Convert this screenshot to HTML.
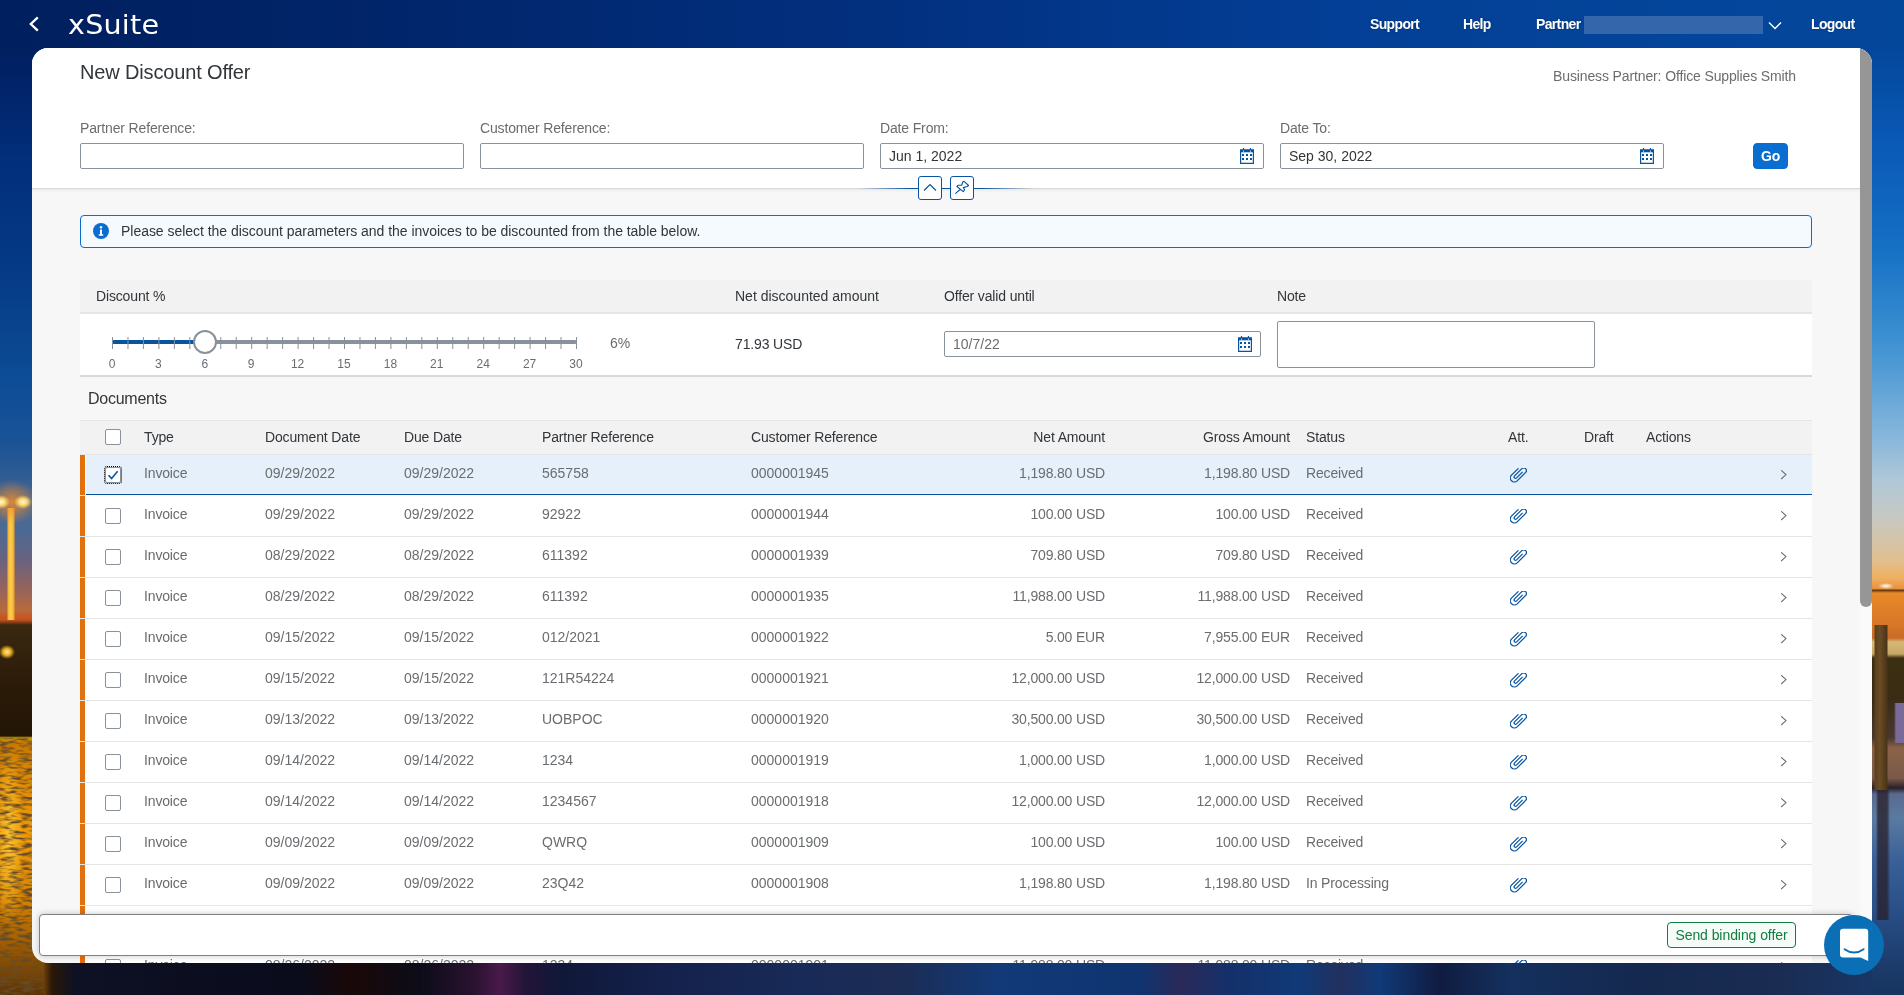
<!DOCTYPE html>
<html lang="en"><head><meta charset="utf-8"><title>New Discount Offer</title>
<style>
*{box-sizing:border-box;margin:0;padding:0}
html,body{width:1904px;height:995px;overflow:hidden}
body{position:relative;font-family:"Liberation Sans","DejaVu Sans",sans-serif;font-size:14px;color:#32363a;background:#02286e}
.abs{position:absolute}
#root{position:absolute;left:0;top:0;width:1904px;height:995px;will-change:transform}
#bg{position:absolute;left:0;top:0;width:1904px;height:995px;background:linear-gradient(90deg,#001f5e 0%,#01256a 20%,#022f7e 45%,#033f96 70%,#03459a 88%,#03479b 100%)}
#bgl{position:absolute;left:0;top:48px;width:44px;height:947px;background:radial-gradient(9px 7px at 1px 454px,#fffbe0 0%,#ffd870 45%,rgba(248,176,64,0) 100%),radial-gradient(9px 7px at 23px 454px,#fffbe0 0%,#ffd870 45%,rgba(248,176,64,0) 100%),radial-gradient(26px 22px at 12px 454px,rgba(240,140,40,.85) 0%,rgba(240,140,40,.45) 50%,rgba(240,140,40,0) 100%),linear-gradient(90deg,transparent 7px,#f4b434 8px,#fcd050 11px,#f0a428 14px,transparent 15px) 0 460px/32px 112px no-repeat,radial-gradient(8px 7px at 7px 604px,#fff0a0 0%,#e8a820 50%,rgba(224,160,32,0) 100%),radial-gradient(14px 90px at 9px 790px,rgba(255,200,50,.9) 0%,rgba(255,192,48,0) 100%),linear-gradient(180deg,#00205f 0px,#01246a 40px,#022e7a 110px,#053a86 220px,#0d4c96 332px,#1a5296 392px,#2a5a94 422px,#4a6690 452px,#4a6a94 482px,#6a6280 512px,#96645a 542px,#b86a3c 562px,#c8501c 572px,#3a2810 577px,#2a1a08 640px,#241606 688px,#c8a000 690px,#c87800 694px,#e08a00 730px,#f09a08 790px,#d88400 850px,#9a5800 900px,#5a3408 947px)}
#bgr{position:absolute;left:1872px;top:48px;width:32px;height:947px;background:radial-gradient(8px 3px at 14px 538px,#ffffff 0%,rgba(255,255,255,0) 100%),linear-gradient(90deg,transparent 2px,#5a4020 3px,#6a4c24 8px,#4a3418 15px,transparent 16px) 0 577px/33px 165px no-repeat,linear-gradient(90deg,transparent 4px,rgba(40,30,40,.75) 6px,rgba(40,30,40,.75) 15px,transparent 18px) 0 742px/33px 130px no-repeat,linear-gradient(90deg,transparent 22px,#7a6a9a 24px) 0 655px/33px 40px no-repeat,linear-gradient(180deg,#03479b 0px,#0a5ab8 100px,#1570c4 200px,#3a8ed0 285px,#4a98d4 312px,#8ab8dc 392px,#b0c8d8 432px,#c8c8c0 472px,#e0c090 512px,#f0b060 530px,#e89040 541px,#5a3010 542px,#e88a28 545px,#d87828 575px,#c86c24 590px,#d8b878 594px,#c8a868 606px,#3a3010 610px,#3a2c14 650px,#4a3830 690px,#8a6248 700px,#7a5a48 730px,#2a2028 740px,#5a6a90 746px,#5a7aa0 770px,#3a6098 812px,#2a5088 860px,#1c3c6c 915px,#18345f 947px)}
#bgb{position:absolute;left:0;top:940px;width:1904px;height:55px;background:linear-gradient(90deg,#d08810 0px,#8a5208 40px,#2a1808 52px,#0e1024 75px,#0a0c1c 300px,#1a0808 350px,#0c0c18 420px,#2a1230 475px,#4a1a4a 500px,#241438 525px,#101838 560px,#14204a 650px,#182a58 800px,#1c2c54 900px,#123a78 1000px,#0f3470 1140px,#2a2a58 1180px,#14306a 1230px,#103a78 1300px,#22305e 1340px,#103a78 1380px,#101c40 1440px,#14305e 1510px,#15284e 1650px,#1a2c52 1780px,#173a6c 1904px)}
/* shell header */
#back{left:28px;top:16px}
#logo{left:68px;top:9px;font-family:"DejaVu Sans","Liberation Sans",sans-serif;font-size:26px;line-height:32px;color:#fff;letter-spacing:0.2px;font-weight:400;transform-origin:0 0;transform:scaleX(1.1)}
.nav{color:#fff;font-weight:700;font-size:14px;line-height:16px;top:16px;white-space:nowrap;letter-spacing:-0.65px;text-shadow:0 0 2px rgba(0,0,0,.35)}
#redact{left:1584px;top:16px;width:179px;height:18px;background:#3466ab}
/* card */
#card{left:32px;top:48px;width:1840px;height:915px;background:#f7f7f7;border-radius:16px 16px 0 16px;overflow:hidden}
#hdr{left:0;top:0;width:1828px;height:140px;background:#fff;box-shadow:0 1px 0 #d9d9d9,0 2px 3px rgba(0,0,0,.08)}
#sb{left:1828px;top:0;width:12px;height:915px;background:#fafafa}
#sbt{left:1828px;top:0;width:12px;height:559px;background:#969696;border-radius:0 12px 6px 6px}
.t{position:absolute;white-space:nowrap;line-height:16px;font-size:14px}
.g{color:#6a6d70}
#title{left:80px;top:60px;font-size:20px;line-height:24px;color:#32363a;letter-spacing:-0.15px}
#bp{right:108px;top:68px;letter-spacing:-0.13px}
.inp{position:absolute;height:26px;border:1px solid #89919a;border-radius:2px;background:#fff;font-size:14px;line-height:24px;padding-left:8px;color:#32363a;white-space:nowrap}
.cal{position:absolute;width:14px;height:16px}
#go{left:1753px;top:143px;width:35px;height:26px;border-radius:4px;background:#0a6ed1;border:1px solid #0a6ed1;color:#fff;font-weight:700;font-size:14px;line-height:24px;text-align:center;letter-spacing:-0.3px}
.hb{position:absolute;top:176px;width:24px;height:24px;border:1px solid #0854a0;border-radius:3px;background:#fff}
#hline{left:858px;top:188px;width:176px;height:1px;background:linear-gradient(90deg,rgba(8,84,160,0) 0%,#0854a0 30%,#0854a0 70%,rgba(8,84,160,0) 100%)}
#msg{left:80px;top:215px;width:1732px;height:33px;border:1px solid #0a6ed1;border-radius:4px;background:#f5faff}
/* discount table */
#dth{left:80px;top:280px;width:1732px;height:34px;background:#f2f2f2;border-bottom:2px solid #e5e5e5}
#dtr{left:80px;top:314px;width:1732px;height:63px;background:#fff;border-bottom:2px solid #d9d9d9}
#trk{left:112px;top:340px;width:465px;height:4px;background:#89919a;border-radius:2px}
#trkf{left:112px;top:340px;width:92px;height:4px;background:#0854a0;border-radius:2px 0 0 2px}
#ticks{left:112px;top:337px;width:465px;height:12px}
#hdl{left:193px;top:330px;width:24px;height:24px;border-radius:50%;border:2px solid #89919a;background:#fff}
.tl{position:absolute;top:357px;width:30px;margin-left:-15px;text-align:center;font-size:12px;line-height:14px;color:#6a6d70}
#note{left:1277px;top:321px;width:318px;height:47px;border:1px solid #89919a;border-radius:2px;background:#fff}
/* documents table */
#th{left:80px;top:420px;width:1732px;height:35px;background:#f2f2f2;border-top:1px solid #e5e5e5;border-bottom:1px solid #e5e5e5}
.h{position:absolute;top:429px;line-height:16px;font-size:14px;color:#32363a;white-space:nowrap}
.row{position:absolute;left:80px;width:1732px;height:41px;background:#fff;border-bottom:1px solid #e5e5e5}
.row:before{content:"";position:absolute;left:0;top:0;width:5px;height:40px;background:#e2700c}
.row.sel{border-bottom:none;background:linear-gradient(#0854a0,#0854a0) 6px 39px/100% 1px no-repeat,linear-gradient(90deg,#e5e5e5 6px,#fff 6px) 0 40px/100% 1px no-repeat,linear-gradient(90deg,#fff 6px,#e5f0fa 6px)}
.row.sel:after{display:none}
.cb{position:absolute;left:25px;top:12px;width:16px;height:16px;border:1px solid #89919a;border-radius:2px;background:#fff}
.cb.on{outline:1px dotted #000;outline-offset:0px}
.cb svg{position:absolute;left:1px;top:1px}
.c{position:absolute;top:10px;line-height:16px;font-size:14px;color:#6a6d70;white-space:nowrap}
.c1{left:64px}.c2{left:185px}.c3{left:324px}.c4{left:462px}.c5{left:671px}
.c6{right:707px}.c7{right:522px}.c8{left:1226px}
.clip{position:absolute;left:1430px;top:13px}
.chv{position:absolute;left:1700px;top:15px}
/* footer */
#foot{left:39px;top:914px;width:1814px;height:42px;background:#fff;border:1px solid #808080;border-radius:4px;box-shadow:0 0 6px rgba(0,0,0,.22)}
#send{left:1667px;top:922px;width:129px;height:26px;border:1px solid #107e3e;border-radius:4px;background:#f5fbf7;color:#107e3e;font-size:14px;line-height:24px;text-align:center;letter-spacing:-0.07px}
#chat{left:1824px;top:915px;width:60px;height:60px;border-radius:50%;background:#0a6fb5}
#clip{left:0;top:0;width:1904px;height:963px;overflow:hidden}
.h,.c1,.c8,.t{letter-spacing:-0.15px}
.c6,.c7{letter-spacing:-0.17px}

</style></head>
<body>
<div id="root">
<div id="bg"></div><div id="bgb"></div><div id="bgl"></div>
<svg class="abs" style="left:0;top:738px" width="44" height="257" viewBox="0 0 44 257"><defs><filter id="wn" x="0" y="0" width="100%" height="100%"><feTurbulence type="fractalNoise" baseFrequency="0.09 0.32" numOctaves="2" seed="7"/><feColorMatrix type="matrix" values="0 0 0 0 0.13  0 0 0 0 0.07  0 0 0 0 0.02  3.2 0 0 0 -1.35"/></filter></defs><rect width="44" height="257" filter="url(#wn)"/></svg><div id="bgr"></div>
<svg id="back" class="abs" width="14" height="16" viewBox="0 0 14 16"><path d="M9.8 1.3 2.8 8 9.8 14.7" fill="none" stroke="#fff" stroke-width="2.3"/></svg>
<div id="logo" class="abs">xSuite</div>
<div class="abs nav" style="left:1370px">Support</div>
<div class="abs nav" style="left:1463px">Help</div>
<div class="abs nav" style="left:1536px">Partner</div>
<div id="redact" class="abs"></div>
<svg class="abs" style="left:1768px;top:21px" width="14" height="9" viewBox="0 0 14 9"><path d="M1 1.5 7 7.5 13 1.5" fill="none" stroke="#fff" stroke-width="1.4"/></svg>
<div class="abs nav" style="left:1811px">Logout</div>
<div id="card" class="abs">
 <div id="hdr" class="abs"></div>
 <div id="sb" class="abs"></div><div id="sbt" class="abs"></div>
</div>

<div id="title" class="abs">New Discount Offer</div>
<div id="bp" class="t g">Business Partner: Office Supplies Smith</div>
<div class="t g" style="left:80px;top:120px">Partner Reference:</div>
<div class="t g" style="left:480px;top:120px">Customer Reference:</div>
<div class="t g" style="left:880px;top:120px">Date From:</div>
<div class="t g" style="left:1280px;top:120px">Date To:</div>
<div class="inp" style="left:80px;top:143px;width:384px"></div>
<div class="inp" style="left:480px;top:143px;width:384px"></div>
<div class="inp" style="left:880px;top:143px;width:384px">Jun 1, 2022</div>
<div class="inp" style="left:1280px;top:143px;width:384px">Sep 30, 2022</div>
<svg class="cal" style="left:1240px;top:148px" viewBox="0 0 14 16"><path d="M0.6 1.9h12.8v13.5H0.6z" fill="none" stroke="#0854a0" stroke-width="1.2"/><path d="M0.6 1.9h12.8v2.4H0.6z" fill="#0854a0"/><path d="M3.5 0v2M10.5 0v2" stroke="#0854a0" stroke-width="1.2"/><circle cx="3.5" cy="3.1" r=".6" fill="#fff"/><circle cx="10.5" cy="3.1" r=".6" fill="#fff"/><path d="M2 6h2v2H2zM6 6h2v2H6zM10 6h2v2h-2zM2 10h2v2H2zM6 10h2v2H6zM10 10h2v2h-2z" fill="#0854a0"/></svg><svg class="cal" style="left:1640px;top:148px" viewBox="0 0 14 16"><path d="M0.6 1.9h12.8v13.5H0.6z" fill="none" stroke="#0854a0" stroke-width="1.2"/><path d="M0.6 1.9h12.8v2.4H0.6z" fill="#0854a0"/><path d="M3.5 0v2M10.5 0v2" stroke="#0854a0" stroke-width="1.2"/><circle cx="3.5" cy="3.1" r=".6" fill="#fff"/><circle cx="10.5" cy="3.1" r=".6" fill="#fff"/><path d="M2 6h2v2H2zM6 6h2v2H6zM10 6h2v2h-2zM2 10h2v2H2zM6 10h2v2H6zM10 10h2v2h-2z" fill="#0854a0"/></svg>
<div id="go" class="abs">Go</div>
<div id="hline" class="abs"></div>
<div class="hb" style="left:918px"><svg width="22" height="22" viewBox="0 0 22 22"><path d="M5 13.5 11 7.5 17 13.5" fill="none" stroke="#0854a0" stroke-width="1.2"/></svg></div>
<div class="hb" style="left:950px"><svg width="22" height="22" viewBox="0 0 22 22"><path d="M13 4.3 17.6 8.5 16.2 9.5 12.3 10.6 13.6 12.7 12.3 14.6 5.9 9.5 7.3 8.2 10.7 8.2 12 4.6zM9.1 12.5 4.3 16.7" fill="none" stroke="#0854a0" stroke-width="1.1" stroke-linejoin="round"/></svg></div>
<div id="msg" class="abs"></div>
<svg class="abs" style="left:93px;top:223px" width="16" height="16" viewBox="0 0 16 16"><circle cx="8" cy="8" r="8" fill="#0a6ed1"/><circle cx="8" cy="4.3" r="1.2" fill="#fff"/><path d="M7 6.6h2v4.6h1.2v1.6H5.8v-1.6H7z" fill="#fff"/></svg>
<div class="t" style="left:121px;top:223px;letter-spacing:-0.03px">Please select the discount parameters and the invoices to be discounted from the table below.</div>
<div id="dth" class="abs"></div><div id="dtr" class="abs"></div>
<div class="t" style="left:96px;top:288px">Discount %</div>
<div class="t" style="left:735px;top:288px;letter-spacing:0">Net discounted amount</div>
<div class="t" style="left:944px;top:288px">Offer valid until</div>
<div class="t" style="left:1277px;top:288px">Note</div>
<div id="trk" class="abs"></div><div id="trkf" class="abs"></div>
<svg id="ticks" class="abs" viewBox="0 0 465 12" fill="none" stroke="#89919a" stroke-width="1"><path d="M0.5 0v12"/><path d="M15.97 0v12"/><path d="M31.43 0v12"/><path d="M46.9 0v12"/><path d="M62.37 0v12"/><path d="M77.83 0v12"/><path d="M93.3 0v12"/><path d="M108.77 0v12"/><path d="M124.23 0v12"/><path d="M139.7 0v12"/><path d="M155.17 0v12"/><path d="M170.63 0v12"/><path d="M186.1 0v12"/><path d="M201.57 0v12"/><path d="M217.03 0v12"/><path d="M232.5 0v12"/><path d="M247.97 0v12"/><path d="M263.43 0v12"/><path d="M278.9 0v12"/><path d="M294.37 0v12"/><path d="M309.83 0v12"/><path d="M325.3 0v12"/><path d="M340.77 0v12"/><path d="M356.23 0v12"/><path d="M371.7 0v12"/><path d="M387.17 0v12"/><path d="M402.63 0v12"/><path d="M418.1 0v12"/><path d="M433.57 0v12"/><path d="M449.03 0v12"/><path d="M464.5 0v12"/></svg>
<div id="hdl" class="abs"></div>
<span class="tl" style="left:112.0px">0</span><span class="tl" style="left:158.4px">3</span><span class="tl" style="left:204.8px">6</span><span class="tl" style="left:251.2px">9</span><span class="tl" style="left:297.6px">12</span><span class="tl" style="left:344.0px">15</span><span class="tl" style="left:390.4px">18</span><span class="tl" style="left:436.8px">21</span><span class="tl" style="left:483.2px">24</span><span class="tl" style="left:529.6px">27</span><span class="tl" style="left:576.0px">30</span>
<div class="t g" style="left:610px;top:335px">6%</div>
<div class="t" style="left:735px;top:336px">71.93 USD</div>
<div class="inp" style="left:944px;top:331px;width:317px;color:#6a6d70">10/7/22</div>
<svg class="cal" style="left:1238px;top:336px" viewBox="0 0 14 16"><path d="M0.6 1.9h12.8v13.5H0.6z" fill="none" stroke="#0854a0" stroke-width="1.2"/><path d="M0.6 1.9h12.8v2.4H0.6z" fill="#0854a0"/><path d="M3.5 0v2M10.5 0v2" stroke="#0854a0" stroke-width="1.2"/><circle cx="3.5" cy="3.1" r=".6" fill="#fff"/><circle cx="10.5" cy="3.1" r=".6" fill="#fff"/><path d="M2 6h2v2H2zM6 6h2v2H6zM10 6h2v2h-2zM2 10h2v2H2zM6 10h2v2H6zM10 10h2v2h-2z" fill="#0854a0"/></svg>
<div id="note" class="abs"></div>
<div class="t" style="left:88px;top:389px;font-size:16px;line-height:20px;letter-spacing:-0.25px">Documents</div>
<div id="th" class="abs"></div>
<span class="cb abs" style="left:105px;top:429px"></span>
<div class="h" style="left:144px">Type</div>
<div class="h" style="left:265px">Document Date</div>
<div class="h" style="left:404px">Due Date</div>
<div class="h" style="left:542px">Partner Reference</div>
<div class="h" style="left:751px">Customer Reference</div>
<div class="h" style="right:799px">Net Amount</div>
<div class="h" style="right:614px">Gross Amount</div>
<div class="h" style="left:1306px">Status</div>
<div class="h" style="left:1508px">Att.</div>
<div class="h" style="left:1584px">Draft</div>
<div class="h" style="left:1646px">Actions</div>
<div id="clip" class="abs">
<div class="row sel" style="top:455px"><span class="cb on"><svg viewBox="0 0 12 12" width="12" height="12"><path d="M1.5 6.2 4.6 9.6 10.6 2.2" fill="none" stroke="#0854a0" stroke-width="1.6"/></svg></span><span class="c c1">Invoice</span><span class="c c2">09/29/2022</span><span class="c c3">09/29/2022</span><span class="c c4">565758</span><span class="c c5">0000001945</span><span class="c r c6">1,198.80 USD</span><span class="c r c7">1,198.80 USD</span><span class="c c8">Received</span><svg class="clip" viewBox="0 0 17 15" width="17" height="15"><path d="M8.45 0.4 L1.45 7.16 A4.05 4.05 0 0 0 7.17 12.89 L15.66 4.40 A2.70 2.70 0 0 0 11.84 0.59 L4.56 7.87 A1.45 1.45 0 0 0 6.61 9.92 L12.62 3.91" fill="none" stroke="#0854a0" stroke-width="1.25"/></svg><svg class="chv" viewBox="0 0 8 10" width="8" height="10"><path d="M1.2 0.3 6 4.6 1.2 9" fill="none" stroke="#6a6d70" stroke-width="1.05"/></svg></div>
<div class="row" style="top:496px"><span class="cb"></span><span class="c c1">Invoice</span><span class="c c2">09/29/2022</span><span class="c c3">09/29/2022</span><span class="c c4">92922</span><span class="c c5">0000001944</span><span class="c r c6">100.00 USD</span><span class="c r c7">100.00 USD</span><span class="c c8">Received</span><svg class="clip" viewBox="0 0 17 15" width="17" height="15"><path d="M8.45 0.4 L1.45 7.16 A4.05 4.05 0 0 0 7.17 12.89 L15.66 4.40 A2.70 2.70 0 0 0 11.84 0.59 L4.56 7.87 A1.45 1.45 0 0 0 6.61 9.92 L12.62 3.91" fill="none" stroke="#0854a0" stroke-width="1.25"/></svg><svg class="chv" viewBox="0 0 8 10" width="8" height="10"><path d="M1.2 0.3 6 4.6 1.2 9" fill="none" stroke="#6a6d70" stroke-width="1.05"/></svg></div>
<div class="row" style="top:537px"><span class="cb"></span><span class="c c1">Invoice</span><span class="c c2">08/29/2022</span><span class="c c3">08/29/2022</span><span class="c c4">611392</span><span class="c c5">0000001939</span><span class="c r c6">709.80 USD</span><span class="c r c7">709.80 USD</span><span class="c c8">Received</span><svg class="clip" viewBox="0 0 17 15" width="17" height="15"><path d="M8.45 0.4 L1.45 7.16 A4.05 4.05 0 0 0 7.17 12.89 L15.66 4.40 A2.70 2.70 0 0 0 11.84 0.59 L4.56 7.87 A1.45 1.45 0 0 0 6.61 9.92 L12.62 3.91" fill="none" stroke="#0854a0" stroke-width="1.25"/></svg><svg class="chv" viewBox="0 0 8 10" width="8" height="10"><path d="M1.2 0.3 6 4.6 1.2 9" fill="none" stroke="#6a6d70" stroke-width="1.05"/></svg></div>
<div class="row" style="top:578px"><span class="cb"></span><span class="c c1">Invoice</span><span class="c c2">08/29/2022</span><span class="c c3">08/29/2022</span><span class="c c4">611392</span><span class="c c5">0000001935</span><span class="c r c6">11,988.00 USD</span><span class="c r c7">11,988.00 USD</span><span class="c c8">Received</span><svg class="clip" viewBox="0 0 17 15" width="17" height="15"><path d="M8.45 0.4 L1.45 7.16 A4.05 4.05 0 0 0 7.17 12.89 L15.66 4.40 A2.70 2.70 0 0 0 11.84 0.59 L4.56 7.87 A1.45 1.45 0 0 0 6.61 9.92 L12.62 3.91" fill="none" stroke="#0854a0" stroke-width="1.25"/></svg><svg class="chv" viewBox="0 0 8 10" width="8" height="10"><path d="M1.2 0.3 6 4.6 1.2 9" fill="none" stroke="#6a6d70" stroke-width="1.05"/></svg></div>
<div class="row" style="top:619px"><span class="cb"></span><span class="c c1">Invoice</span><span class="c c2">09/15/2022</span><span class="c c3">09/15/2022</span><span class="c c4">012/2021</span><span class="c c5">0000001922</span><span class="c r c6">5.00 EUR</span><span class="c r c7">7,955.00 EUR</span><span class="c c8">Received</span><svg class="clip" viewBox="0 0 17 15" width="17" height="15"><path d="M8.45 0.4 L1.45 7.16 A4.05 4.05 0 0 0 7.17 12.89 L15.66 4.40 A2.70 2.70 0 0 0 11.84 0.59 L4.56 7.87 A1.45 1.45 0 0 0 6.61 9.92 L12.62 3.91" fill="none" stroke="#0854a0" stroke-width="1.25"/></svg><svg class="chv" viewBox="0 0 8 10" width="8" height="10"><path d="M1.2 0.3 6 4.6 1.2 9" fill="none" stroke="#6a6d70" stroke-width="1.05"/></svg></div>
<div class="row" style="top:660px"><span class="cb"></span><span class="c c1">Invoice</span><span class="c c2">09/15/2022</span><span class="c c3">09/15/2022</span><span class="c c4">121R54224</span><span class="c c5">0000001921</span><span class="c r c6">12,000.00 USD</span><span class="c r c7">12,000.00 USD</span><span class="c c8">Received</span><svg class="clip" viewBox="0 0 17 15" width="17" height="15"><path d="M8.45 0.4 L1.45 7.16 A4.05 4.05 0 0 0 7.17 12.89 L15.66 4.40 A2.70 2.70 0 0 0 11.84 0.59 L4.56 7.87 A1.45 1.45 0 0 0 6.61 9.92 L12.62 3.91" fill="none" stroke="#0854a0" stroke-width="1.25"/></svg><svg class="chv" viewBox="0 0 8 10" width="8" height="10"><path d="M1.2 0.3 6 4.6 1.2 9" fill="none" stroke="#6a6d70" stroke-width="1.05"/></svg></div>
<div class="row" style="top:701px"><span class="cb"></span><span class="c c1">Invoice</span><span class="c c2">09/13/2022</span><span class="c c3">09/13/2022</span><span class="c c4">UOBPOC</span><span class="c c5">0000001920</span><span class="c r c6">30,500.00 USD</span><span class="c r c7">30,500.00 USD</span><span class="c c8">Received</span><svg class="clip" viewBox="0 0 17 15" width="17" height="15"><path d="M8.45 0.4 L1.45 7.16 A4.05 4.05 0 0 0 7.17 12.89 L15.66 4.40 A2.70 2.70 0 0 0 11.84 0.59 L4.56 7.87 A1.45 1.45 0 0 0 6.61 9.92 L12.62 3.91" fill="none" stroke="#0854a0" stroke-width="1.25"/></svg><svg class="chv" viewBox="0 0 8 10" width="8" height="10"><path d="M1.2 0.3 6 4.6 1.2 9" fill="none" stroke="#6a6d70" stroke-width="1.05"/></svg></div>
<div class="row" style="top:742px"><span class="cb"></span><span class="c c1">Invoice</span><span class="c c2">09/14/2022</span><span class="c c3">09/14/2022</span><span class="c c4">1234</span><span class="c c5">0000001919</span><span class="c r c6">1,000.00 USD</span><span class="c r c7">1,000.00 USD</span><span class="c c8">Received</span><svg class="clip" viewBox="0 0 17 15" width="17" height="15"><path d="M8.45 0.4 L1.45 7.16 A4.05 4.05 0 0 0 7.17 12.89 L15.66 4.40 A2.70 2.70 0 0 0 11.84 0.59 L4.56 7.87 A1.45 1.45 0 0 0 6.61 9.92 L12.62 3.91" fill="none" stroke="#0854a0" stroke-width="1.25"/></svg><svg class="chv" viewBox="0 0 8 10" width="8" height="10"><path d="M1.2 0.3 6 4.6 1.2 9" fill="none" stroke="#6a6d70" stroke-width="1.05"/></svg></div>
<div class="row" style="top:783px"><span class="cb"></span><span class="c c1">Invoice</span><span class="c c2">09/14/2022</span><span class="c c3">09/14/2022</span><span class="c c4">1234567</span><span class="c c5">0000001918</span><span class="c r c6">12,000.00 USD</span><span class="c r c7">12,000.00 USD</span><span class="c c8">Received</span><svg class="clip" viewBox="0 0 17 15" width="17" height="15"><path d="M8.45 0.4 L1.45 7.16 A4.05 4.05 0 0 0 7.17 12.89 L15.66 4.40 A2.70 2.70 0 0 0 11.84 0.59 L4.56 7.87 A1.45 1.45 0 0 0 6.61 9.92 L12.62 3.91" fill="none" stroke="#0854a0" stroke-width="1.25"/></svg><svg class="chv" viewBox="0 0 8 10" width="8" height="10"><path d="M1.2 0.3 6 4.6 1.2 9" fill="none" stroke="#6a6d70" stroke-width="1.05"/></svg></div>
<div class="row" style="top:824px"><span class="cb"></span><span class="c c1">Invoice</span><span class="c c2">09/09/2022</span><span class="c c3">09/09/2022</span><span class="c c4">QWRQ</span><span class="c c5">0000001909</span><span class="c r c6">100.00 USD</span><span class="c r c7">100.00 USD</span><span class="c c8">Received</span><svg class="clip" viewBox="0 0 17 15" width="17" height="15"><path d="M8.45 0.4 L1.45 7.16 A4.05 4.05 0 0 0 7.17 12.89 L15.66 4.40 A2.70 2.70 0 0 0 11.84 0.59 L4.56 7.87 A1.45 1.45 0 0 0 6.61 9.92 L12.62 3.91" fill="none" stroke="#0854a0" stroke-width="1.25"/></svg><svg class="chv" viewBox="0 0 8 10" width="8" height="10"><path d="M1.2 0.3 6 4.6 1.2 9" fill="none" stroke="#6a6d70" stroke-width="1.05"/></svg></div>
<div class="row" style="top:865px"><span class="cb"></span><span class="c c1">Invoice</span><span class="c c2">09/09/2022</span><span class="c c3">09/09/2022</span><span class="c c4">23Q42</span><span class="c c5">0000001908</span><span class="c r c6">1,198.80 USD</span><span class="c r c7">1,198.80 USD</span><span class="c c8">In Processing</span><svg class="clip" viewBox="0 0 17 15" width="17" height="15"><path d="M8.45 0.4 L1.45 7.16 A4.05 4.05 0 0 0 7.17 12.89 L15.66 4.40 A2.70 2.70 0 0 0 11.84 0.59 L4.56 7.87 A1.45 1.45 0 0 0 6.61 9.92 L12.62 3.91" fill="none" stroke="#0854a0" stroke-width="1.25"/></svg><svg class="chv" viewBox="0 0 8 10" width="8" height="10"><path d="M1.2 0.3 6 4.6 1.2 9" fill="none" stroke="#6a6d70" stroke-width="1.05"/></svg></div>
<div class="row" style="top:906px"><span class="cb"></span><span class="c c1">Invoice</span><span class="c c2">09/07/2022</span><span class="c c3">09/07/2022</span><span class="c c4">4711</span><span class="c c5">0000001905</span><span class="c r c6">250.00 USD</span><span class="c r c7">250.00 USD</span><span class="c c8">Received</span><svg class="clip" viewBox="0 0 17 15" width="17" height="15"><path d="M8.45 0.4 L1.45 7.16 A4.05 4.05 0 0 0 7.17 12.89 L15.66 4.40 A2.70 2.70 0 0 0 11.84 0.59 L4.56 7.87 A1.45 1.45 0 0 0 6.61 9.92 L12.62 3.91" fill="none" stroke="#0854a0" stroke-width="1.25"/></svg><svg class="chv" viewBox="0 0 8 10" width="8" height="10"><path d="M1.2 0.3 6 4.6 1.2 9" fill="none" stroke="#6a6d70" stroke-width="1.05"/></svg></div>
<div class="row" style="top:947px"><span class="cb"></span><span class="c c1">Invoice</span><span class="c c2">08/26/2022</span><span class="c c3">08/26/2022</span><span class="c c4">1234</span><span class="c c5">0000001901</span><span class="c r c6">11,988.00 USD</span><span class="c r c7">11,988.00 USD</span><span class="c c8">Received</span><svg class="clip" viewBox="0 0 17 15" width="17" height="15"><path d="M8.45 0.4 L1.45 7.16 A4.05 4.05 0 0 0 7.17 12.89 L15.66 4.40 A2.70 2.70 0 0 0 11.84 0.59 L4.56 7.87 A1.45 1.45 0 0 0 6.61 9.92 L12.62 3.91" fill="none" stroke="#0854a0" stroke-width="1.25"/></svg><svg class="chv" viewBox="0 0 8 10" width="8" height="10"><path d="M1.2 0.3 6 4.6 1.2 9" fill="none" stroke="#6a6d70" stroke-width="1.05"/></svg></div>
</div>
<div id="foot" class="abs"></div>
<div id="send" class="abs">Send binding offer</div>
<div id="chat" class="abs"><svg width="60" height="60" viewBox="0 0 60 60"><path d="M19 13.8H41.2a3 3 0 0 1 3 3V46L36.5 42.6H19a3 3 0 0 1-3-3V16.8a3 3 0 0 1 3-3z" fill="#fff"/><path d="M20.6 34.2Q30 41 39.6 34.2" fill="none" stroke="#0a6fb5" stroke-width="2" stroke-linecap="round"/></svg></div>
</div>
</body></html>
